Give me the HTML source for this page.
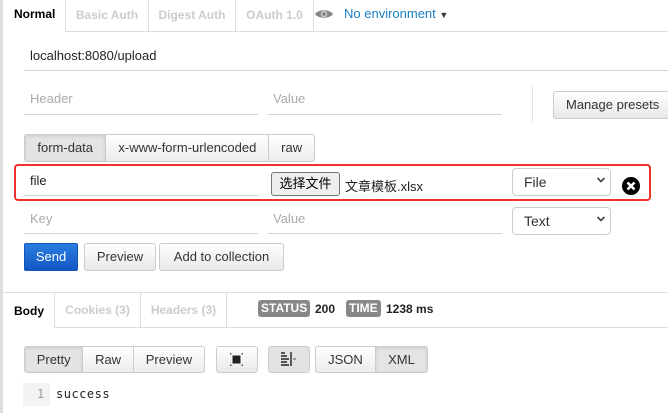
<!DOCTYPE html>
<html><head><meta charset="utf-8"><style>
*{box-sizing:border-box;margin:0;padding:0}
body{width:668px;height:413px;background:#fff;position:relative;overflow:hidden;font-family:"Liberation Sans","Noto Sans CJK SC",sans-serif;font-size:13px;color:#333}
.a{position:absolute}
.t{position:absolute;white-space:nowrap}
.ul{position:absolute;height:1px;background:#d4d4d4}
.btn{position:absolute;border:1px solid #ccc;border-radius:3px;background:linear-gradient(#fff,#e8e8e8);text-align:center;color:#333;font-size:13px}
.grp{position:absolute;border:1px solid #ccc;border-radius:3px;display:flex;overflow:hidden;background:linear-gradient(#fff,#ececec)}
.grp div{border-right:1px solid #ccc;text-align:center;font-size:13px}
.grp div:last-child{border-right:none}
.grp .on{background:#e4e4e4;box-shadow:inset 0 1px 3px rgba(0,0,0,.12)}
.sel{position:absolute;border:1px solid #ccc;border-radius:4px;background:#fff;font-size:14px;padding-left:11px}
.tab{position:absolute;border-right:1px solid #ddd;color:#ccc;font-weight:bold;font-size:12px;text-align:center}
</style></head><body>
<div class="a" style="left:0;top:0;width:3px;height:413px;background:#ddd"></div>

<!-- top tabs -->
<div class="ul" style="left:65px;top:31px;width:603px;background:#ddd"></div>
<div class="a" style="left:65px;top:0;width:1px;height:32px;background:#ddd"></div>
<div class="t" style="left:14px;top:7px;font-weight:bold;font-size:12px;color:#000">Normal</div>
<div class="tab" style="left:66px;top:0;width:83px;height:31px;line-height:30px">Basic Auth</div>
<div class="tab" style="left:149px;top:0;width:87px;height:31px;line-height:30px">Digest Auth</div>
<div class="tab" style="left:236px;top:0;width:78px;height:31px;line-height:30px">OAuth 1.0</div>
<svg class="a" style="left:314px;top:8px" width="20" height="12" viewBox="0 0 20 12"><path d="M1 6C4 1 16 1 19 6C16 11 4 11 1 6Z" fill="#888"/><circle cx="10" cy="6" r="3.2" fill="#ccc"/><circle cx="10" cy="6" r="1.6" fill="#777"/></svg>
<div class="t" style="left:344px;top:6px;color:#1a7fc1;font-size:13px">No environment <span style="font-size:9px;color:#333">&#9660;</span></div>

<!-- URL -->
<div class="t" style="left:30px;top:48px;font-size:13px;color:#222">localhost:8080/upload</div>
<div class="ul" style="left:24px;top:70px;width:644px"></div>

<!-- Header row -->
<div class="t" style="left:30px;top:91px;color:#aaa">Header</div>
<div class="ul" style="left:24px;top:114px;width:234px"></div>
<div class="t" style="left:273px;top:91px;color:#aaa">Value</div>
<div class="ul" style="left:268px;top:114px;width:234px"></div>
<div class="a" style="left:532px;top:86px;width:1px;height:37px;background:#e4e4e4"></div>
<div class="btn" style="left:553px;top:91px;width:120px;height:28px;line-height:26px;text-align:left;padding-left:12px">Manage presets</div>

<!-- body type group -->
<div class="grp" style="left:24px;top:134px;width:291px;height:28px;line-height:26px">
<div class="on" style="width:82px">form-data</div><div style="width:164px">x-www-form-urlencoded</div><div style="width:45px">raw</div></div>

<!-- red box -->
<div class="a" style="left:14px;top:164px;width:637px;height:37px;border:2px solid #f0302a;border-radius:4px"></div>
<div class="t" style="left:30px;top:173px;color:#222">file</div>
<div class="ul" style="left:24px;top:195px;width:234px"></div>
<div class="a" style="left:271px;top:172px;width:69px;height:24px;border:1px solid #777;border-radius:3px;background:#efefef;font-size:13px;text-align:center;line-height:22px;color:#000">选择文件</div>
<div class="t" style="left:345px;top:176px;color:#222">文章模板.xlsx</div>
<div class="sel" style="left:512px;top:168px;width:99px;height:28px;line-height:26px">File</div>
<svg class="a" style="left:596px;top:176px" width="10" height="8" viewBox="0 0 10 8"><path d="M1.5 2L5 5.5 8.5 2" stroke="#444" stroke-width="1.6" fill="none"/></svg>
<svg class="a" style="left:621px;top:176px" width="20" height="20" viewBox="0 0 20 20"><circle cx="10" cy="10" r="9" fill="#000"/><path d="M6.5 6.5L13.5 13.5M13.5 6.5L6.5 13.5" stroke="#fff" stroke-width="2.6"/></svg>

<!-- key row -->
<div class="t" style="left:30px;top:211px;color:#aaa">Key</div>
<div class="ul" style="left:24px;top:233px;width:234px"></div>
<div class="t" style="left:273px;top:211px;color:#aaa">Value</div>
<div class="ul" style="left:268px;top:233px;width:234px"></div>
<div class="sel" style="left:512px;top:207px;width:99px;height:28px;line-height:26px">Text</div>
<svg class="a" style="left:596px;top:215px" width="10" height="8" viewBox="0 0 10 8"><path d="M1.5 2L5 5.5 8.5 2" stroke="#444" stroke-width="1.6" fill="none"/></svg>

<!-- action buttons -->
<div class="a" style="left:24px;top:243px;width:54px;height:28px;border:1px solid #1656b8;border-radius:2px;background:linear-gradient(#2a7ee0,#1257c4);color:#fff;text-align:center;line-height:26px;font-size:13px">Send</div>
<div class="btn" style="left:84px;top:243px;width:72px;height:28px;line-height:26px">Preview</div>
<div class="btn" style="left:159px;top:243px;width:125px;height:28px;line-height:26px">Add to collection</div>

<!-- response tabs -->
<div class="ul" style="left:3px;top:292px;width:665px;background:#ddd"></div>
<div class="ul" style="left:54px;top:327px;width:614px;background:#ddd"></div>
<div class="a" style="left:54px;top:292px;width:1px;height:36px;background:#ddd"></div>
<div class="t" style="left:14px;top:304px;font-weight:bold;font-size:12px;color:#000">Body</div>
<div class="tab" style="left:55px;top:293px;width:86px;height:34px;line-height:34px">Cookies (3)</div>
<div class="tab" style="left:141px;top:293px;width:86px;height:34px;line-height:34px">Headers (3)</div>
<div class="t" style="left:258px;top:300px;background:#888;color:#fff;font-weight:bold;font-size:12px;border-radius:3px;padding:0 3px;height:17px;line-height:17px">STATUS</div>
<div class="t" style="left:315px;top:302px;font-weight:bold;font-size:12px;color:#222">200</div>
<div class="t" style="left:346px;top:300px;background:#888;color:#fff;font-weight:bold;font-size:12px;border-radius:3px;padding:0 3px;height:17px;line-height:17px">TIME</div>
<div class="t" style="left:386px;top:302px;font-weight:bold;font-size:12px;color:#222">1238 ms</div>

<!-- view buttons -->
<div class="grp" style="left:24px;top:346px;width:181px;height:27px;line-height:25px">
<div class="on" style="width:59px">Pretty</div><div style="width:51px">Raw</div><div style="width:71px">Preview</div></div>
<div class="btn" style="left:216px;top:346px;width:42px;height:27px"></div>
<svg class="a" style="left:230px;top:353px" width="13" height="13" viewBox="0 0 13 13"><rect x="2.5" y="2.5" width="8" height="8" fill="#222"/><path d="M0 0h1.5v1.5H0zM11.5 0H13v1.5h-1.5zM0 11.5h1.5V13H0zM11.5 11.5H13V13h-1.5z" fill="#555"/></svg>
<div class="btn" style="left:268px;top:346px;width:42px;height:27px;background:#e2e2e2"></div>
<svg class="a" style="left:281px;top:352px" width="16" height="14" viewBox="0 0 16 14"><path d="M0 1h4M0 4h6M0 7h8M0 10h6M0 13h8" stroke="#222" stroke-width="1.4"/><path d="M10 0v14" stroke="#222" stroke-width="1.4"/><path d="M12 7h3" stroke="#555" stroke-width="1"/></svg>
<div class="grp" style="left:315px;top:346px;width:113px;height:27px;line-height:25px">
<div style="width:61px">JSON</div><div class="on" style="width:52px">XML</div></div>

<!-- output -->
<div class="a" style="left:23px;top:383px;width:27px;height:23px;background:#f3f3f3"></div>
<div class="t" style="left:37px;top:387px;font-family:'DejaVu Sans Mono','Liberation Mono',monospace;font-size:12px;color:#999">1</div>
<div class="t" style="left:56px;top:387px;font-family:'DejaVu Sans Mono','Liberation Mono',monospace;font-size:12px;color:#222;letter-spacing:.5px">success</div>
</body></html>
